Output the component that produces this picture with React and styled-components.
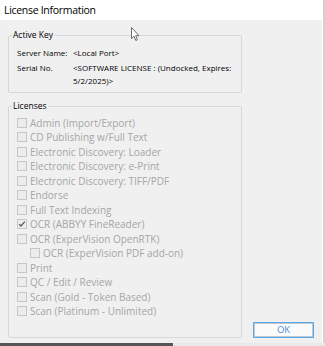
import React from "react";
import styled, { createGlobalStyle } from "styled-components";

const GlobalStyle = createGlobalStyle`
  html, body { margin: 0; padding: 0; background: #ffffff; }
  * { box-sizing: border-box; }
`;

const FONT = `"Open Sans", "Noto Sans", "Liberation Sans", sans-serif`;

const Page = styled.div`
  position: relative;
  width: 325px;
  height: 346px;
  display: flex;
  flex-direction: column;
  background: #d2d2d2;
  font-family: ${FONT};
  overflow: hidden;
`;

const Window = styled.div`
  width: 323px;
  flex: 1;
  display: flex;
  flex-direction: column;
  border-right: 1px solid #ffffff;
  background: #f0f0f0;
`;

const TitleBar = styled.div`
  height: 20px;
  background: #ffffff;
  display: flex;
  align-items: center;
  padding-left: 4px;
  font-size: 10.5px;
  letter-spacing: -0.3px;
  color: #000000;
`;

const Body = styled.div`
  flex: 1;
  display: flex;
  padding: 10px 8px 5px 8px;
`;

const LeftColumn = styled.div`
  width: 234px;
  display: flex;
  flex-direction: column;
  gap: 8px;
`;

const Group = styled.fieldset`
  margin: 0;
  padding: 0 0 0 3px;
  border: 1px solid #d7d7d7;
  border-radius: 2px;
  min-width: 0;
  flex: ${(p) => (p.$grow ? 1 : "none")};
  height: ${(p) => (p.$height ? `${p.$height}px` : "auto")};
`;

const Legend = styled.legend`
  padding: 0 1px;
  font-size: 8.5px;
  line-height: 10px;
  color: #000000;
`;

const InfoGrid = styled.div`
  display: grid;
  grid-template-columns: 56px 1fr;
  row-gap: 2px;
  padding: 5.5px 0 0 5px;
  font-size: 8px;
  line-height: 13px;
  color: #000000;
`;

const InfoValue = styled.div`
  white-space: nowrap;
`;

const CheckList = styled.div`
  display: flex;
  flex-direction: column;
  padding: 4.5px 0 0 5px;
`;

const CheckRow = styled.div`
  height: 14.5px;
  display: flex;
  align-items: center;
  gap: 3px;
  padding-left: ${(p) => (p.$indent ? 13 : 0)}px;
  font-size: 10px;
  color: #a6a6a6;
  white-space: nowrap;
`;

const Box = styled.span`
  width: 10px;
  height: 10px;
  flex: none;
  border: 1px solid #c6c6c6;
  background: #ececec;
  display: flex;
  align-items: center;
  justify-content: center;
`;

const ButtonColumn = styled.div`
  flex: 1;
  display: flex;
  align-items: flex-end;
  justify-content: flex-end;
`;

const OkButton = styled.button`
  width: 61px;
  height: 16px;
  margin: 0;
  padding: 0;
  border: 1px solid #5aa7e6;
  box-shadow: inset 0 0 0 1px #bcc8d4;
  border-radius: 0;
  background: #fbfbfb;
  color: #4b8fd6;
  font-family: ${FONT};
  font-size: 9.5px;
  line-height: 14px;
`;

const Taskbar = styled.div`
  height: 3px;
  display: flex;
`;

const TaskDark = styled.div`
  width: 173px;
  background: #555555;
`;

const TaskLight = styled.div`
  flex: 1;
  background: #e9e9e9;
`;

const Cursor = styled.svg`
  position: absolute;
  left: 131px;
  top: 27px;
`;

const licenses = [
  { label: "Admin (Import/Export)" },
  { label: "CD Publishing w/Full Text" },
  { label: "Electronic Discovery: Loader" },
  { label: "Electronic Discovery: e-Print" },
  { label: "Electronic Discovery: TIFF/PDF" },
  { label: "Endorse" },
  { label: "Full Text Indexing" },
  { label: "OCR (ABBYY FineReader)", checked: true },
  { label: "OCR (ExperVision OpenRTK)" },
  { label: "OCR (ExperVision PDF add-on)", indent: true },
  { label: "Print" },
  { label: "QC / Edit / Review" },
  { label: "Scan (Gold - Token Based)" },
  { label: "Scan (Platinum - Unlimited)" },
];

function Check({ checked }) {
  return (
    <Box>
      {checked && (
        <svg width="8" height="8" viewBox="0 0 8 8">
          <path d="M1.2 4.2 L3 6 L6.8 1.6" fill="none" stroke="#5a5a5a" strokeWidth="1.3" />
        </svg>
      )}
    </Box>
  );
}

export default function App() {
  return (
    <Page>
      <GlobalStyle />
      <Window>
        <TitleBar>License Information</TitleBar>
        <Body>
          <LeftColumn>
            <Group $height={63}>
              <Legend>Active Key</Legend>
              <InfoGrid>
                <div>Server Name:</div>
                <InfoValue>&lt;Local Port&gt;</InfoValue>
                <div>Serial No.</div>
                <InfoValue>
                  &lt;SOFTWARE LICENSE : (Undocked, Expires:
                  <br />
                  5/2/2025)&gt;
                </InfoValue>
              </InfoGrid>
            </Group>
            <Group $grow>
              <Legend>Licenses</Legend>
              <CheckList>
                {licenses.map((l) => (
                  <CheckRow key={l.label} $indent={l.indent}>
                    <Check checked={l.checked} />
                    {l.label}
                  </CheckRow>
                ))}
              </CheckList>
            </Group>
          </LeftColumn>
          <ButtonColumn>
            <OkButton>OK</OkButton>
          </ButtonColumn>
        </Body>
      </Window>
      <Taskbar>
        <TaskDark />
        <TaskLight />
      </Taskbar>
      <Cursor width="10" height="15" viewBox="0 0 10 15">
        <path d="M0.5 0.5 L0.5 11.5 L3 9.2 L4.8 13.5 L6.4 12.8 L4.7 8.7 L8 8.7 Z" fill="#ffffff" stroke="#6a6a6a" strokeWidth="1" />
      </Cursor>
    </Page>
  );
}
